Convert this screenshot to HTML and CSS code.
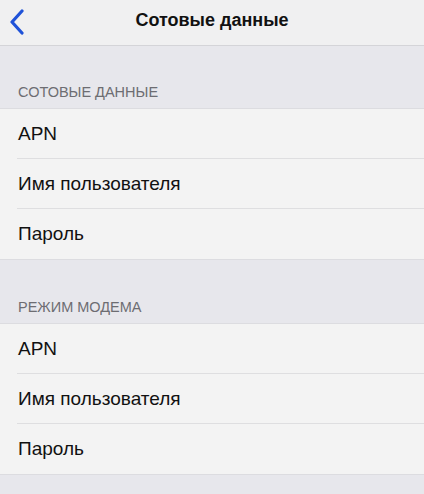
FILE: index.html
```html
<!DOCTYPE html>
<html lang="ru">
<head>
<meta charset="utf-8">
<link rel="stylesheet" href="styles.css">
</head>
<body>
<div class="screen">
  <header class="nav">
    <svg class="back" width="16" height="26" viewBox="0 0 16 26"><path d="M13 2 L3 13 L13 24" fill="none" stroke="#1f52d8" stroke-width="3.2" stroke-linecap="round" stroke-linejoin="round"/></svg>
    <div class="title">Сотовые данные</div>
  </header>
  <div class="section-head">СОТОВЫЕ ДАННЫЕ</div>
  <div class="group">
    <div class="row">APN</div>
    <div class="row">Имя пользователя</div>
    <div class="row">Пароль</div>
  </div>
  <div class="section-head second">РЕЖИМ МОДЕМА</div>
  <div class="group">
    <div class="row">APN</div>
    <div class="row">Имя пользователя</div>
    <div class="row">Пароль</div>
  </div>
</div>
</body>
</html>
```
FILE: styles.css
```css
* { box-sizing: border-box; }
html, body { margin: 0; padding: 0; }
body {
  background: #e7e7ec;
  font-family: "Liberation Sans", Arial, sans-serif;
  width: 424px;
  height: 494px;
  overflow: hidden;
}
.screen { display: flex; flex-direction: column; }
.nav {
  height: 46px;
  background: #f0f0f1;
  border-bottom: 1px solid #d4d4d8;
  display: flex;
  align-items: center;
  justify-content: center;
  position: relative;
}
.back { position: absolute; left: 9px; top: 9px; }
.title { font-size: 18px; font-weight: bold; color: #111; margin-top: -4px; }
.section-head {
  height: 63px;
  padding: 0 18px 8px;
  display: flex;
  align-items: flex-end;
  font-size: 14.5px;
  color: #6d6d72;
  border-bottom: 1px solid #dcdce0;
}
.section-head.second { height: 64px; }
.group {
  background: #f3f3f3;
  padding-left: 17px;
  border-bottom: 1px solid #dcdce0;
}
.row {
  height: 50px;
  display: flex;
  align-items: center;
  font-size: 19px;
  color: #111;
  padding-left: 1px;
  border-bottom: 1px solid #dedee0;
}
.row:last-child { border-bottom: none; }
```
